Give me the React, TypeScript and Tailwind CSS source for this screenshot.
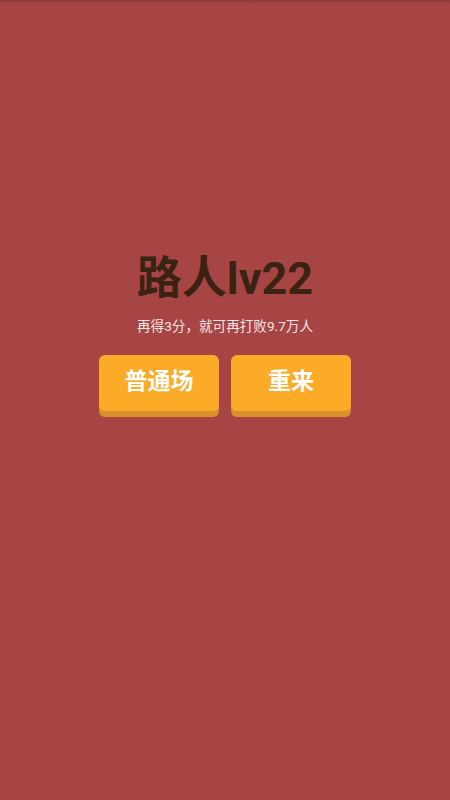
export default function App() {
  return (
    <div
      className="relative w-full h-[800px] bg-[#a74444] overflow-hidden"
      style={{ fontFamily: 'Roboto, "Noto Sans CJK SC", sans-serif' }}
    >
      <div className="absolute top-0 left-0 right-0 h-[4px] bg-gradient-to-b from-black/15 to-transparent" />
      <div className="flex flex-col items-center pt-[256px]">
        <h1 className="text-[45px] leading-none font-bold text-[#3a2313]">路人lv22</h1>
        <p className="mt-[19px] text-[13.6px] leading-none text-[#f7e6e6]">再得3分，就可再打败9.7万人</p>
        <div className="mt-[21px] flex gap-3">
          <button className="w-[120px] h-[56px] rounded-[6px] bg-[#fbab27] shadow-[0_6px_0_#d8912b] text-white text-[23px] font-bold">
            普通场
          </button>
          <button className="w-[120px] h-[56px] rounded-[6px] bg-[#fbab27] shadow-[0_6px_0_#d8912b] text-white text-[23px] font-bold">
            重来
          </button>
        </div>
      </div>
    </div>
  )
}
